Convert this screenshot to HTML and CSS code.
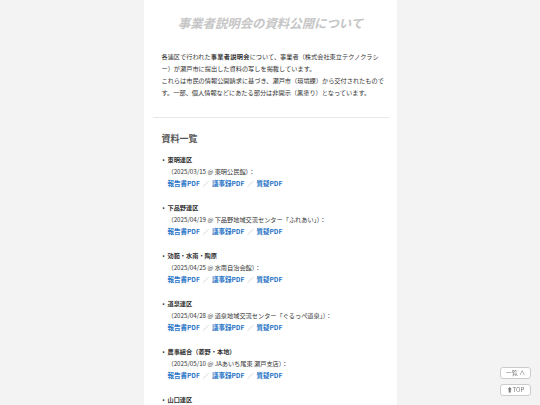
FILE: index.html
```html
<!DOCTYPE html>
<html lang="ja">
  <head>
    <meta charset="UTF-8" />
    <meta name="viewport" content="width=device-width, initial-scale=1.0" />
    <title>事業者説明会の資料公開について</title>
    <link rel="stylesheet" href="styles.css">
  </head>
  <body>
    <div class="page">
      <h1 class="title">事業者説明会の資料公開について</h1>
      <p class="intro">
        各連区で行われた<b>事業者説明会</b>について、事業者（株式会社東立テクノクラシー）が瀬戸市に提出した資料の写しを掲載しています。<br>
        これらは市民の情報公開請求に基づき、瀬戸市（環境課）から交付されたものです。一部、個人情報などにあたる部分は非開示（黒塗り）となっています。
      </p>
      <hr class="rule">
      <h2 class="heading">資料一覧</h2>
      <ul class="docs">
        <li>
          <b>東明連区</b><br>
          （2025/03/15 @ 東明公民館）：<br>
          <a href="#">報告書PDF</a><span class="sep">／</span><a href="#">議事録PDF</a><span class="sep">／</span><a href="#">質疑PDF</a>
        </li>
        <li>
          <b>下品野連区</b><br>
          （2025/04/19 @ 下品野地域交流センター「ふれあい」）：<br>
          <a href="#">報告書PDF</a><span class="sep">／</span><a href="#">議事録PDF</a><span class="sep">／</span><a href="#">質疑PDF</a>
        </li>
        <li>
          <b>効範・水南・陶原</b><br>
          （2025/04/25 @ 水南自治会館）：<br>
          <a href="#">報告書PDF</a><span class="sep">／</span><a href="#">議事録PDF</a><span class="sep">／</span><a href="#">質疑PDF</a>
        </li>
        <li>
          <b>道泉連区</b><br>
          （2025/04/28 @ 道泉地域交流センター「ぐるっぺ道泉」）：<br>
          <a href="#">報告書PDF</a><span class="sep">／</span><a href="#">議事録PDF</a><span class="sep">／</span><a href="#">質疑PDF</a>
        </li>
        <li>
          <b>農事組合（菱野・本地）</b><br>
          （2025/05/10 @ JAあいち尾東 瀬戸支店）：<br>
          <a href="#">報告書PDF</a><span class="sep">／</span><a href="#">議事録PDF</a><span class="sep">／</span><a href="#">質疑PDF</a>
        </li>
        <li>
          <b>山口連区</b><br>
          （2025/05/17 @ 山口公民館）：<br>
          <a href="#">報告書PDF</a><span class="sep">／</span><a href="#">議事録PDF</a><span class="sep">／</span><a href="#">質疑PDF</a>
        </li>
      </ul>
    </div>
    <div class="jump">
      <a class="jump-btn" href="#">一覧 ∧</a>
      <a class="jump-btn" href="#">⬆TOP</a>
    </div>
  </body>
</html>
```

FILE: styles.css
```css
* {
  margin: 0;
  padding: 0;
  box-sizing: border-box;
}
body {
  background: #f3f3f3;
  font-family: "Noto Sans CJK JP", "Noto Sans", sans-serif;
  color: #333333;
}
.page {
  width: 253px;
  min-height: 100vh;
  margin: 0 auto;
  padding: 14px 8px 0 9px;
  background: #ffffff;
}
.title {
  font-size: 12.4px;
  line-height: 18px;
  font-style: italic;
  font-weight: bold;
  text-align: center;
  color: #c6c6c6;
}
.intro {
  margin-top: 19px;
  padding: 0 3px 0 9px;
  font-size: 6.2px;
  line-height: 12px;
}
.intro b {
  letter-spacing: 0.3px;
}
.rule {
  margin-top: 18px;
  border: 0;
  border-top: 1px solid #e8e8e8;
}
.heading {
  margin-top: 14px;
  padding-left: 9px;
  font-size: 9px;
  line-height: 14px;
  color: #555555;
}
.docs {
  margin-top: 8px;
  padding-left: 15px;
  list-style-type: "•  ";
  font-size: 6.2px;
  line-height: 12px;
}
.docs li {
  margin-bottom: 12px;
}
.docs a {
  color: #1f73c6;
  font-size: 6.5px;
  line-height: 1;
  font-weight: bold;
  text-decoration: none;
}
.sep {
  color: #aaaaaa;
  margin: 0 3px;
}
.jump {
  position: fixed;
  right: 9px;
  bottom: 9px;
  display: flex;
  flex-direction: column;
  gap: 5px;
}
.jump-btn {
  display: block;
  width: 31px;
  height: 12px;
  border: 1px solid #cccccc;
  border-radius: 3px;
  background: #ffffff;
  color: #777777;
  font-size: 6px;
  line-height: 10px;
  text-align: center;
  text-decoration: none;
}
```
